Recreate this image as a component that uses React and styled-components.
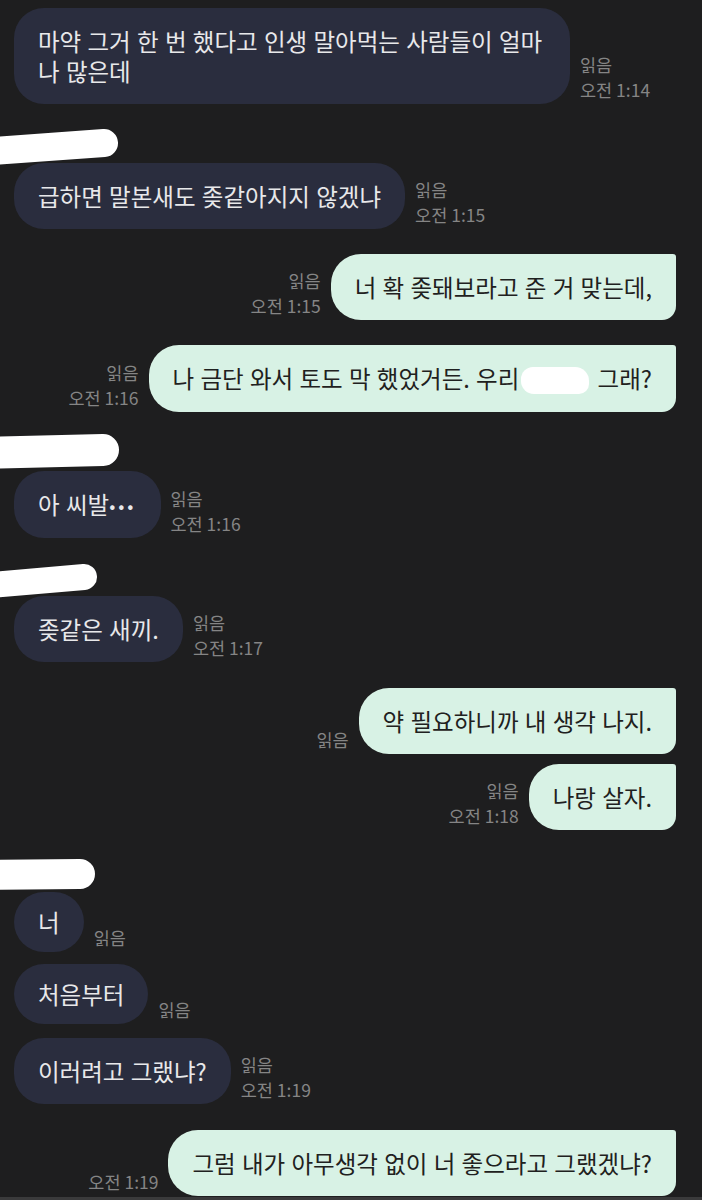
import React from 'react'
import styled, { createGlobalStyle } from 'styled-components'

const GlobalStyle = createGlobalStyle`
  html, body {
    margin: 0;
    padding: 0;
    background: #1e1e1f;
  }
  body {
    font-family: "Noto Sans CJK KR", "Noto Sans", sans-serif;
  }
`

const Screen = styled.main`
  box-sizing: border-box;
  width: 702px;
  height: 1200px;
  overflow: hidden;
  background: #1e1e1f;
  border-bottom: 3px solid #3a3a3b;
  padding-top: 8px;
`

const NameTag = styled.div`
  height: ${p => p.$h}px;
  margin-top: ${p => p.$gap}px;
  svg {
    display: block;
    overflow: visible;
  }
`

const Row = styled.div`
  display: flex;
  align-items: flex-end;
  gap: 10px;
  margin-top: ${p => p.$gap || 0}px;
  justify-content: ${p => (p.$out ? 'flex-end' : 'flex-start')};
  padding: ${p => (p.$out ? '0 26px 0 0' : '0 0 0 14px')};
`

const Bubble = styled.div`
  max-width: ${p => (p.$out ? '540px' : '556px')};
  padding: ${p => (p.$compact ? '15px' : '18px')} 24px;
  font-size: 23.5px;
  word-spacing: 1px;
  line-height: 30px;
  border-radius: ${p => (p.$out ? '30px 3px 14px 30px' : '30px')};
  background: ${p => (p.$out ? '#d8f2e5' : '#2a2d3e')};
  color: ${p => (p.$out ? '#1f2120' : '#e8e8ea')};
  box-sizing: border-box;
  white-space: ${p => (p.$nowrap ? 'nowrap' : 'normal')};
`

const Dots = styled.span`
  font-size: 18px;
  letter-spacing: 3px;
  vertical-align: 1px;
`

const Meta = styled.div`
  flex-shrink: 0;
  font-size: 17.5px;
  line-height: 25px;
  color: #858585;
  white-space: nowrap;
  padding-bottom: 2px;
  text-align: ${p => (p.$out ? 'right' : 'left')};
`

const Redaction = styled.span`
  display: inline-block;
  width: 68px;
  height: 27px;
  margin: 0 2px;
  vertical-align: -6px;
  background: #ffffff;
  border-radius: 12px 14px 10px 13px;
`

const Scribble = ({ h, gap, d, w }) => (
  <NameTag $h={h} $gap={gap}>
    <svg width="130" height={h} viewBox={`0 0 130 ${h}`}>
      <path d={d} stroke="#ffffff" strokeWidth={w} strokeLinecap="round" fill="none" />
    </svg>
  </NameTag>
)

const Message = ({ out, gap, read, time, compact, nowrap, children }) => {
  const meta = (read || time) && (
    <Meta $out={out}>
      {read && <div>읽음</div>}
      {time && <div>{time}</div>}
    </Meta>
  )
  return (
    <Row $out={out} $gap={gap}>
      {out && meta}
      <Bubble $out={out} $compact={compact} $nowrap={nowrap}>{children}</Bubble>
      {!out && meta}
    </Row>
  )
}

const App = () => {
  return (
    <>
      <GlobalStyle />
      <Screen>
        <Message read time="오전 1:14">
          마약 그거 한 번 했다고 인생 말아먹는 사람들이 얼마나 많은데
        </Message>

        <Scribble h={35} gap={24} d="M-20 24 L104 15" w={28} />
        <Message read time="오전 1:15">급하면 말본새도 좆같아지지 않겠냐</Message>

        <Message out gap={25} read time="오전 1:15">너 확 좆돼보라고 준 거 맞는데,</Message>
        <Message out gap={25} read time="오전 1:16" nowrap>
          나 금단 와서 토도 막 했었거든. 우리<Redaction /> 그래?
        </Message>

        <Scribble h={37} gap={22} d="M-20 19 L103 16" w={32} />
        <Message read time="오전 1:16">아 씨발<Dots>•••</Dots></Message>

        <Scribble h={32} gap={26} d="M-20 22 L84 13" w={26} />
        <Message read time="오전 1:17">좆같은 새끼.</Message>

        <Message out gap={26} read>약 필요하니까 내 생각 나지.</Message>
        <Message out gap={10} read time="오전 1:18">나랑 살자.</Message>

        <Scribble h={35} gap={27} d="M-20 18 L80 17" w={30} />
        <Message compact read>너</Message>
        <Message compact gap={12} read>처음부터</Message>
        <Message gap={14} read time="오전 1:19">이러려고 그랬냐?</Message>

        <Message out gap={26} time="오전 1:19" nowrap>그럼 내가 아무생각 없이 너 좋으라고 그랬겠냐?</Message>
      </Screen>
    </>
  )
}

export default App
